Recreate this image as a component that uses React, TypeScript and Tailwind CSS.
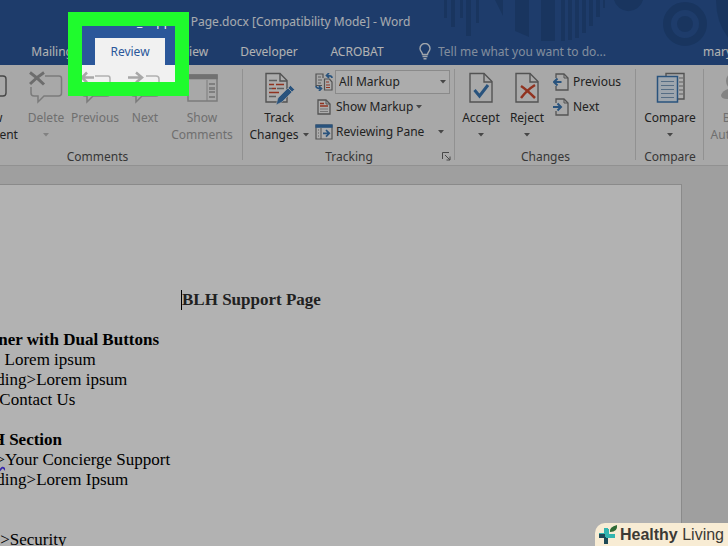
import React from "react";
import clsx from "clsx";

const tabs = [
  { name: "Mailings", width: "w-20" },
  { name: "Review", width: "w-[70px]" },
  { name: "View", width: "w-[60px]" },
  { name: "Developer", width: "w-[88px]" },
  { name: "ACROBAT", width: "w-[88px]" },
];

const Caret = () => (
  <svg width="6" height="4" viewBox="0 0 6 4" className="shrink-0">
    <path d="M0 0h6L3 3.5z" fill="#666" />
  </svg>
);

const HeaderPattern = () => (
  <svg
    width="300"
    height="65"
    viewBox="428 0 300 65"
    className="absolute right-0 top-0"
    fill="#244c89"
  >
    <path d="M444 0h3v18h-3zM451 0h4v27h-4zM460 0h3v18h-3zM466 0h5v36h-5zM476 0h3v23h-3zM495 0h8v16zM515 0h14v37l-14-6zM541 0h14v41h-14z" />
    <path d="M561 0h4v41h-4zM568 0h4v40h-4zM575 0h4v38h-4zM582 0h4v33h-4zM589 0h4v26h-4zM596 0h4v17h-4zM603 0h2v8h-2z" />
    <path d="M614 0h29a15 15 0 0 1-29 0z" />
    <circle cx="685" cy="24" r="18" fill="none" stroke="#244c89" strokeWidth="8" />
    <circle cx="685" cy="24" r="8" />
    <path d="M716 0h14v40q-14-16-14-40z" />
  </svg>
);

const BulbIcon = () => (
  <svg width="12" height="17" viewBox="0 0 12 17" fill="none" stroke="#e6ecf5" strokeWidth="1.4">
    <path d="M3.5 11.5C3.5 9 1 8.5 1 5.5a5 5 0 0 1 10 0C11 8.5 8.5 9 8.5 11.5zM3.5 13.5h5M4.5 15.7h3" />
  </svg>
);

const NewCommentIcon = () => (
  <svg width="34" height="34" viewBox="0 0 34 34" fill="none" stroke="#666" strokeWidth="1.4">
    <path d="M4 5h26q3 0 3 3v14q0 3-3 3H14l-6 6v-6H4q-3 0-3-3V8q0-3 3-3z" />
  </svg>
);

const BubbleIcon = ({ kind }: { kind: "delete" | "previous" | "next" }) => (
  <svg width="34" height="34" viewBox="0 0 34 34" fill="none" stroke="#b1b1b1" strokeWidth="1.5">
    {kind === "delete" && (
      <>
        <path d="M16 5h14q2.500 0 2.500 2.500V22q0 3-3 3H15l-6 6v-6H5q-3 0-3-3v-6" />
        <path d="M1 1.500q7 5 14 12M15 1.500Q8 6 1 13" stroke="#9d9d9d" strokeWidth="3" />
      </>
    )}
    {kind === "previous" && (
      <>
        <path d="M17 5h13q2 0 2 2.500V22q0 3-3 3H15l-6 6v-6H7q-3 0-3-3v-8" />
        <path d="M16 6.500H4M9 1.500l-5 5 5 5" stroke="#a8a8a8" strokeWidth="2.500" />
      </>
    )}
    {kind === "next" && (
      <>
        <path d="M18 5h10q3 0 3 3v14q0 3-3 3H14l-6 6v-6H6q-3 0-3-3v-9" />
        <path d="M0 6.500h14M8 1.500l6 5-6 5" stroke="#a8a8a8" strokeWidth="2.500" />
      </>
    )}
  </svg>
);

const ShowCommentsIcon = () => (
  <svg width="34" height="34" viewBox="0 0 34 34" fill="none">
    <path d="M3 4h29v26H3z" stroke="#b1b1b1" strokeWidth="1.5" />
    <path d="M2.300 3.300h30.400v5H2.300z" fill="#a3a3a3" />
    <path d="M22 9v21" stroke="#b1b1b1" />
    <path d="M24 13h6M24 21h6M24 26h6" stroke="#a3a3a3" strokeWidth="1.5" />
    <path d="M24 16h6v3h-6z" fill="#b8b8b8" />
  </svg>
);

const TrackIcon = () => (
  <svg width="34" height="34" viewBox="0 0 34 34" fill="none">
    <path d="M4 2.500h14l7 7V31H4z" fill="#f6f6f6" stroke="#777" strokeWidth="1.4" />
    <path d="M18 2.500V10h7" stroke="#777" strokeWidth="1.4" />
    <path d="M7 9.500h8M7 17.500h3M15 17.500h7M7 25.500h7" stroke="#888" strokeWidth="1.3" />
    <path d="M7 13.500h5M14 13.500h8M7 21.500h10M10 17.500h4" stroke="#d0492f" strokeWidth="1.3" />
    <path d="M28.500 14.500l4 4L20 31l-6 3 2-7z" fill="#3c78b4" stroke="#f1f1f1" strokeWidth=".6" />
    <path d="M26 17l4 4" stroke="#f1f1f1" strokeWidth=".8" />
  </svg>
);

const DecisionIcon = ({ reject }: { reject?: boolean }) => (
  <svg width="34" height="34" viewBox="0 0 34 34" fill="none">
    <path d="M6 2.500h14l8 8V31H6z" fill="#f3f3f3" stroke="#777" strokeWidth="1.4" />
    <path d="M20 2.500V11h8" stroke="#777" strokeWidth="1.4" />
    {reject ? (
      <path d="M11 15q6 4 14 12M25 14q-8 5-14 13" stroke="#d0492f" strokeWidth="2.500" />
    ) : (
      <path d="M10.500 19l5 6 8.500-11" stroke="#3c78b4" strokeWidth="3" />
    )}
  </svg>
);

const CompareIcon = () => (
  <svg width="34" height="34" viewBox="0 0 34 34" fill="none">
    <path d="M13 2.500h18V28H13z" fill="#f6f6f6" stroke="#777" strokeWidth="1.4" />
    <path d="M26 7h4M26 11h4M26 15h4M26 19h4M26 23h4" stroke="#888" />
    <path d="M4.500 5.500h20V31h-20z" fill="#e3eefa" stroke="#3c78b4" strokeWidth="1.5" />
    <path d="M8 10.500h13M8 14.500h13M8 18.500h13M8 22.500h13M8 26.500h13" stroke="#7c9cbe" />
  </svg>
);

const BlockIcon = () => (
  <svg width="34" height="34" viewBox="0 0 34 34" fill="#bcbcbc">
    <circle cx="14" cy="10" r="9" />
    <path d="M0 24q3-7 14-7 14 1 16 11H6q-6 0-6-4z" />
  </svg>
);

const MarkupIcon = () => (
  <svg width="18" height="18" viewBox="0 0 18 18" fill="none" strokeWidth="1.2">
    <path d="M7 12.500H1V1h7v4" stroke="#777" />
    <path d="M9.500 6h5l2.500 3v8H9.500z" fill="#f6f6f6" stroke="#777" />
    <path d="M3 4h3M3 7h4M3 10h3" stroke="#888" />
    <path d="M11 9h3M11 12h4M11 14.500h4" stroke="#d0492f" />
    <path d="M17 5q0-2.500-5-2.500M14 0l-2.500 2.500L14 5M1 13q0 2.500 5 2.500M4 13l2.500 2.500L4 18" stroke="#3c78b4" strokeWidth="1.7" />
  </svg>
);

const ShowMarkupIcon = () => (
  <svg width="18" height="18" viewBox="0 0 18 18" fill="none">
    <path d="M3 2h8l4 4v10H3z" fill="#f6f6f6" stroke="#777" strokeWidth="1.3" />
    <path d="M11 2v4h4" stroke="#777" />
    <path d="M5 5.500h4M5 8h8" stroke="#d0492f" strokeWidth="1.3" />
    <path d="M5 11h8M5 13.500h8" stroke="#aaa" />
  </svg>
);

const PaneIcon = () => (
  <svg width="18" height="18" viewBox="0 0 18 18" fill="none">
    <path d="M1 2h16v14H1z" fill="#f6f6f6" stroke="#777" strokeWidth="1.2" />
    <path d="M.4 1.400h17.200v3.400H.4z" fill="#3c78b4" />
    <path d="M6 5v11" stroke="#777" />
    <path d="M3 7h1M3 10h1M3 13h1" stroke="#888" />
    <path d="M8 10.300h6M11 7l3.300 3.300L11 13.600" stroke="#3c78b4" strokeWidth="1.7" />
  </svg>
);

const StepIcon = ({ next }: { next?: boolean }) => (
  <svg width="16" height="18" viewBox="0 0 16 18" fill="none">
    <path d="M3 5V1h8l4 4v12H3v-4" stroke="#777" strokeWidth="1.3" />
    <path d="M11 1v4h4" stroke="#777" />
    <path
      d={next ? "M0 9h7.500M4.500 5.500L8 9l-3.500 3.500" : "M8.500 9H1M4.500 5.500L1 9l3.500 3.500"}
      stroke="#3c78b4"
      strokeWidth="2"
    />
  </svg>
);

interface BigButtonProps {
  icon: React.ReactNode;
  lines: string[];
  width: string;
  caret?: "below" | "inline";
  disabled?: boolean;
}

const BigButton = ({ icon, lines, width, caret, disabled }: BigButtonProps) => (
  <button
    disabled={disabled}
    className={clsx(
      "flex flex-col items-center shrink-0 whitespace-nowrap leading-[17px]",
      width,
      disabled ? "text-[#a0a0a0]" : "text-[#303030]"
    )}
  >
    <span className="h-[44px] pt-[6px]">{icon}</span>
    <span>{lines[0]}</span>
    <span className={clsx("flex h-[17px] items-center gap-1", disabled && "[&_svg]:opacity-40")}>
      {lines[1]}
      {caret && <Caret />}
    </span>
  </button>
);

interface GroupProps {
  title: string;
  className: string;
  launcher?: boolean;
  children: React.ReactNode;
}

const Group = ({ title, className, launcher, children }: GroupProps) => (
  <section className={clsx("relative flex flex-col shrink-0", className)}>
    <div className="flex h-[83px]">{children}</div>
    <h2 className="text-center leading-[17px] text-[#505050]">{title}</h2>
    {launcher && (
      <button aria-label={title} className="absolute bottom-1 right-1">
        <svg width="9" height="9" viewBox="0 0 9 9" fill="none" stroke="#666">
          <path d="M.5 7V.5H7M3 3l5 5M8 4.500V8H4.500" />
        </svg>
      </button>
    )}
    <span className="absolute right-0 top-1 h-[91px] w-px bg-[#d0d0d0]" />
  </section>
);

const App = () => {
  return (
    <div className="relative h-screen overflow-hidden bg-[#e4e4e4] font-['Noto_Sans','Open_Sans',sans-serif] text-[12px]">
      <header className="relative h-[65px] bg-[#2b579a] text-white">
        <HeaderPattern />
        <h1 className="relative ml-[114px] h-[38px] whitespace-nowrap pt-3 leading-[20px] text-[#f0f4fa]">
          BLH_Support Page.docx [Compatibility Mode] - Word
        </h1>
        <nav className="relative flex h-[27px] items-stretch pl-[15px]">
          {tabs.map(tab => (
            <button
              key={tab.name}
              className={clsx(
                "shrink-0",
                tab.width,
                tab.name === "Review" && "bg-[#f1f1f1] text-[#2b579a]"
              )}
            >
              {tab.name}
            </button>
          ))}
          <label className="ml-[18px] flex flex-1 items-center gap-[7px]">
            <BulbIcon />
            <input
              type="text"
              aria-label="Tell me"
              placeholder="Tell me what you want to do..."
              className="w-[200px] bg-transparent outline-none placeholder:text-[#bccae0]"
            />
          </label>
          <button className="w-[25px] shrink-0 whitespace-nowrap text-left">mary</button>
        </nav>
      </header>

      <div className="flex h-[101px] overflow-hidden border-b border-[#d0d0d0] bg-[#f1f1f1]">
        <Group title="Comments" className="-ml-12 w-[291px]">
          <BigButton icon={<NewCommentIcon />} lines={["New", "Comment"]} width="w-[76px]" />
          <BigButton icon={<BubbleIcon kind="delete" />} lines={["Delete"]} width="w-[36px]" caret="below" disabled />
          <BigButton icon={<BubbleIcon kind="previous" />} lines={["Previous"]} width="w-[62px]" disabled />
          <BigButton icon={<BubbleIcon kind="next" />} lines={["Next"]} width="w-[38px]" disabled />
          <BigButton icon={<ShowCommentsIcon />} lines={["Show", "Comments"]} width="w-[76px]" disabled />
        </Group>

        <Group title="Tracking" className="w-[212px] text-[#303030]" launcher>
          <BigButton icon={<TrackIcon />} lines={["Track", "Changes"]} width="w-[72px]" caret="inline" />
          <div className="flex flex-1 flex-col pr-[5px] pt-1">
            <div className="flex h-[25px] items-center">
              <MarkupIcon />
              <div className="relative ml-[2px] flex-1">
                <select
                  aria-label="Display for Review"
                  className="h-[24px] w-full appearance-none border border-[#c6c6c6] bg-[#f6f6f6] pl-[3px]"
                >
                  <option>All Markup</option>
                </select>
                <span className="pointer-events-none absolute right-1 top-[10px]">
                  <Caret />
                </span>
              </div>
            </div>
            <button className="flex h-[25px] items-center gap-[3px]">
              <ShowMarkupIcon />
              Show Markup
              <Caret />
            </button>
            <button className="flex h-[25px] items-center gap-[3px] pr-[6px]">
              <PaneIcon />
              <span className="flex-1 text-left">Reviewing Pane</span>
              <Caret />
            </button>
          </div>
        </Group>

        <Group title="Changes" className="w-[181px] text-[#303030]">
          <BigButton icon={<DecisionIcon />} lines={["Accept"]} width="w-[52px]" caret="below" />
          <BigButton icon={<DecisionIcon reject />} lines={["Reject"]} width="w-[40px]" caret="below" />
          <div className="flex flex-col pl-[6px] pt-1">
            <button className="flex h-[25px] items-center gap-1">
              <StepIcon />
              Previous
            </button>
            <button className="flex h-[25px] items-center gap-1">
              <StepIcon next />
              Next
            </button>
          </div>
        </Group>

        <Group title="Compare" className="w-[68px]">
          <BigButton icon={<CompareIcon />} lines={["Compare"]} width="w-[68px]" caret="below" />
        </Group>

        <div className="flex shrink-0 pl-1">
          <BigButton icon={<BlockIcon />} lines={["Block", "Authors"]} width="w-[60px]" caret="inline" disabled />
        </div>
      </div>

      {/* the document is scrolled a little to the right, its left margin is off screen */}
      <main className="mr-[46px] mt-[18px] h-screen border border-l-0 border-[#c6c6c6] bg-white font-['Liberation_Serif',serif] text-[17px] leading-[20px] text-black">
        <div className="-ml-[31px] whitespace-nowrap pt-[105px]">
          <h2 className="ml-[212px] w-fit border-l border-black font-bold text-[#303030]">BLH Support Page</h2>
          <p className="mt-5 font-bold">Banner with Dual Buttons</p>
          <p>CT&gt; Lorem ipsum</p>
          <p>Heading&gt;Lorem ipsum</p>
          <p>H2&gt;Contact Us</p>
          <p className="mt-5 font-bold">BLH Section</p>
          <p>
            <span className="underline decoration-indigo-600 decoration-wavy">Sub&gt;</span>
            Your Concierge Support
          </p>
          <p>Heading&gt;Lorem Ipsum</p>
          <p className="mt-10">Item&gt;Security</p>
        </div>
      </main>

      {/* spotlight on the Review tab, the shadow dims everything else */}
      <div className="pointer-events-none absolute left-[68px] top-3 h-[84px] w-[121px] border-[14px] border-[#1ffb2d] shadow-[0_0_0_2000px_rgba(0,0,0,0.3)]" />

      <a
        href="#"
        className="absolute bottom-0 right-0 flex h-[23px] items-center gap-[2px] rounded-tl-[10px] bg-[#f8ecd4] pl-[3px] pr-1 font-['Liberation_Sans',sans-serif] text-[16px] text-[#3c3a35]"
      >
        <svg width="20" height="21" viewBox="0 0 20 21" fill="none">
          <path d="M8 4v7H1" stroke="#33b5b0" strokeWidth="4" />
          <path d="M1 12h7v8" stroke="#1d4a57" strokeWidth="4" />
          <path d="M8 12h9M9 5v8" stroke="#33b5b0" strokeWidth="4" />
          <path d="M12 8q-1-5 7-7 1 7-7 7z" fill="#2f6b35" />
        </svg>
        <span>
          <b>Healthy</b> Living
        </span>
      </a>
    </div>
  );
};

export default App;
